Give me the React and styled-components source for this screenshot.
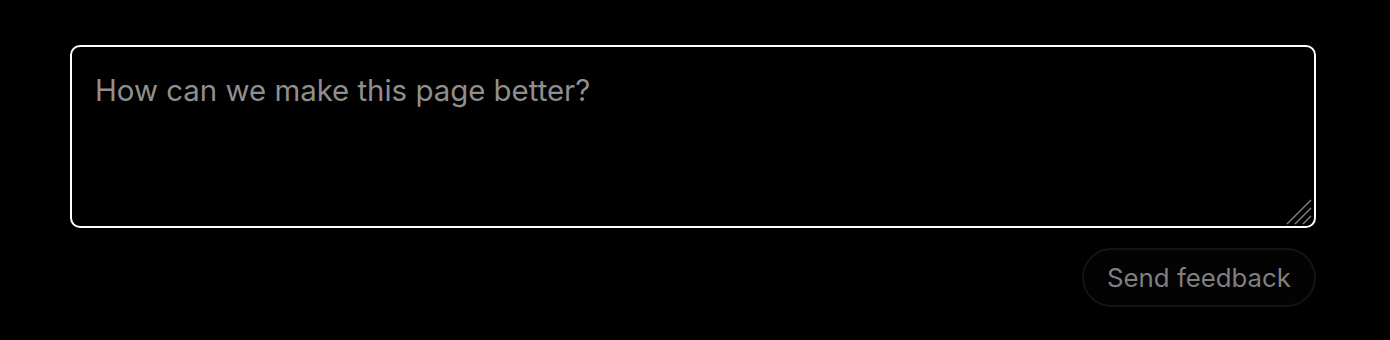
import styled, { createGlobalStyle } from "styled-components";

const GlobalStyle = createGlobalStyle`
    html, body {
        margin: 0;
        background: #000;
        font-family: "Inter", "Liberation Sans", sans-serif;
    }
`

export default function App () {
    return (
        <Page>
            <GlobalStyle />
            <FeedbackForm onSubmit={e => e.preventDefault()}>
                <Field>
                    <FeedbackInput placeholder="How can we make this page better?" />
                    <ResizeGrip viewBox="0 0 26 26" aria-hidden="true">
                        <path d="M1 25 L25 1 M9 25 L25 9 M17 25 L25 17" />
                    </ResizeGrip>
                </Field>
                <Actions>
                    <SendButton type="submit">Send feedback</SendButton>
                </Actions>
            </FeedbackForm>
        </Page>
    )
}

const Page = styled.div`
    padding: 45px 74px 0 70px;
    height: 340px;
    box-sizing: border-box;
`

const FeedbackForm = styled.form`
    display: flex;
    flex-direction: column;
    gap: 20px;
`

const Field = styled.div`
    position: relative;
    display: flex;
`

const FeedbackInput = styled.textarea`
    box-sizing: border-box;
    width: 100%;
    height: 183px;
    padding: 22px 23px;
    background: #000;
    color: #fff;
    border: 2px solid #fff;
    border-radius: 10px;
    font-family: inherit;
    font-size: 29.4px;
    line-height: 1.5;
    outline: none;
    resize: none;

    &::placeholder {
        color: #8f8f8f;
    }
`

const ResizeGrip = styled.svg`
    position: absolute;
    right: 4px;
    bottom: 3px;
    width: 26px;
    height: 26px;
    pointer-events: none;

    path {
        stroke: #8a8a8a;
        stroke-width: 1.2;
        fill: none;
    }
`

const Actions = styled.div`
    display: flex;
    justify-content: flex-end;
`

const SendButton = styled.button`
    height: 59px;
    padding: 0 23px;
    background: #030303;
    color: #7f7f7f;
    border: 2px solid #141414;
    border-radius: 30px;
    font-family: inherit;
    font-size: 25.8px;
    cursor: pointer;
`
